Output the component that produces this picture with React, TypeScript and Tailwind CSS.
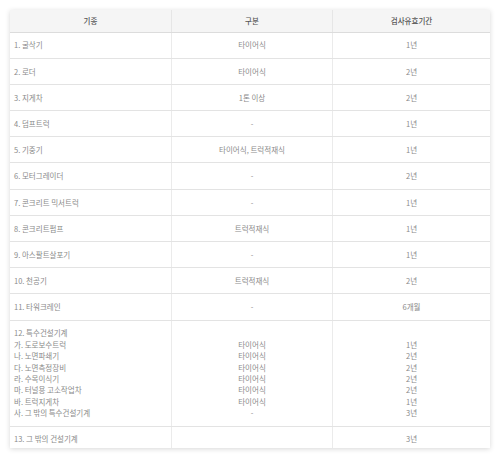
import React from 'react';

type Row = { name: string[]; kind: string[]; period: string[] };

const rows: Row[] = [
  { name: ['1. 굴삭기'], kind: ['타이어식'], period: ['1년'] },
  { name: ['2. 로더'], kind: ['타이어식'], period: ['2년'] },
  { name: ['3. 지게차'], kind: ['1톤 이상'], period: ['2년'] },
  { name: ['4. 덤프트럭'], kind: ['-'], period: ['1년'] },
  { name: ['5. 기중기'], kind: ['타이어식, 트럭적재식'], period: ['1년'] },
  { name: ['6. 모터그레이더'], kind: ['-'], period: ['2년'] },
  { name: ['7. 콘크리트 믹서트럭'], kind: ['-'], period: ['1년'] },
  { name: ['8. 콘크리트펌프'], kind: ['트럭적재식'], period: ['1년'] },
  { name: ['9. 아스팔트살포기'], kind: ['-'], period: ['1년'] },
  { name: ['10. 천공기'], kind: ['트럭적재식'], period: ['2년'] },
  { name: ['11. 타워크레인'], kind: ['-'], period: ['6개월'] },
  {
    name: [
      '12. 특수건설기계',
      '가. 도로보수트럭',
      '나. 노면파쇄기',
      '다. 노면측정장비',
      '라. 수목이식기',
      '마. 터널용 고소작업차',
      '바. 트럭지게차',
      '사. 그 밖의 특수건설기계',
    ],
    kind: ['\u00a0', '타이어식', '타이어식', '타이어식', '타이어식', '타이어식', '타이어식', '-'],
    period: ['\u00a0', '1년', '2년', '2년', '2년', '2년', '1년', '3년'],
  },
  { name: ['13. 그 밖의 건설기계'], kind: ['\u00a0'], period: ['3년'] },
];

function Lines({ items }: { items: string[] }) {
  return (
    <>
      {items.map((t, i) => (
        <div key={i}>{t}</div>
      ))}
    </>
  );
}

export default function App() {
  return (
    <div className="min-h-[459px] bg-white px-[10px] pt-[9.5px] font-['Noto_Sans_CJK_KR','Noto_Sans',sans-serif] text-[7.5px] leading-[11.4px] text-[#8a8a8a]">
      <div className="bg-white shadow-[0_1px_5px_rgba(0,0,0,0.16)]">
        <div className="grid grid-cols-[162px_161px_1fr] border-b border-[#dcdcdc] bg-[#f5f5f5] text-center font-medium text-[#555]">
          <div className="border-r border-[#e6e6e6] py-[5.3px]">기종</div>
          <div className="border-r border-[#e6e6e6] py-[5.3px]">구분</div>
          <div className="py-[5.3px]">검사유효기간</div>
        </div>
        {rows.map((row, i) => {
          const last = i === rows.length - 1;
          const pad = last ? 'pt-[6.5px] pb-[3.5px]' : 'py-[6.9px]';
          return (
            <div
              key={i}
              className={`grid grid-cols-[162px_161px_1fr] ${last ? '' : 'border-b border-[#e3e3e3]'}`}
            >
              <div className={`border-r border-[#ebebeb] pl-[4px] ${pad}`}>
                <Lines items={row.name} />
              </div>
              <div className={`border-r border-[#ebebeb] text-center ${pad}`}>
                <Lines items={row.kind} />
              </div>
              <div className={`text-center ${pad}`}>
                <Lines items={row.period} />
              </div>
            </div>
          );
        })}
      </div>
    </div>
  );
}
